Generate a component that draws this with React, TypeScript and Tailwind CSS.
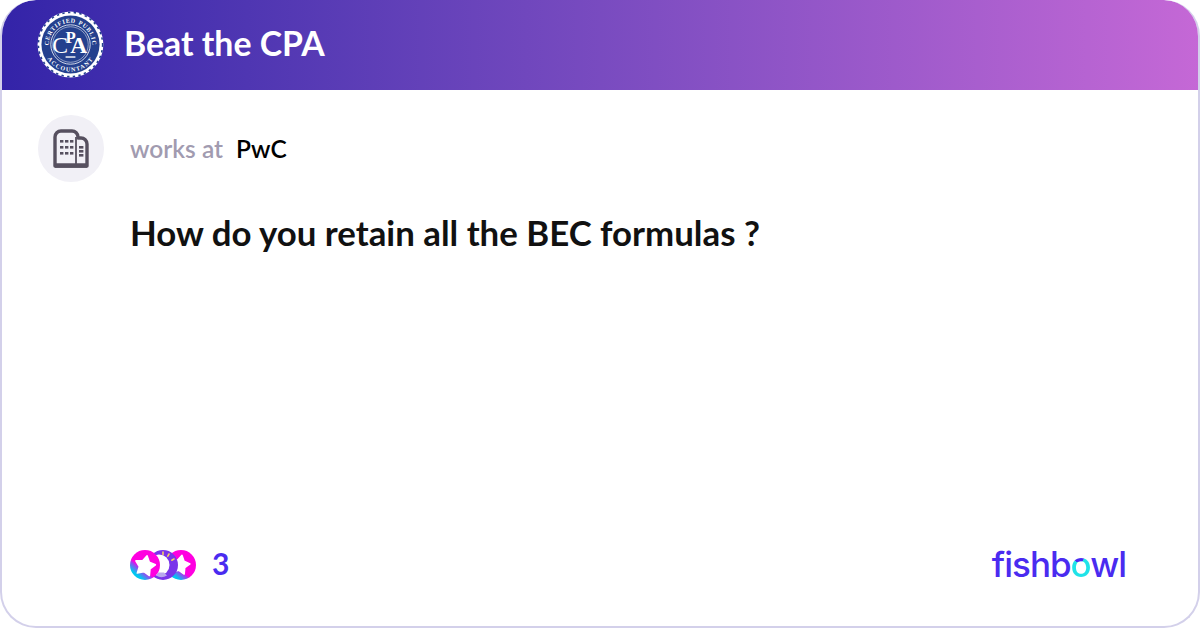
import React from 'react';

const Seal = () => (
  <svg width="67" height="67" viewBox="0 0 68 68" className="shrink-0">
    <defs>
      <path id="sealTop" d="M 14.1 43.3 A 22 22 0 1 1 53.9 43.3" />
      <path id="sealBottom" d="M 6.5 34 A 27.5 27.5 0 0 0 61.5 34" />
    </defs>
    <circle cx="34" cy="34" r="33.4" fill="#ffffff" />
    <circle cx="34" cy="34" r="32.6" fill="none" stroke="#24408e" strokeWidth="1.6" strokeDasharray="2.4 3.4" />
    <circle cx="34" cy="34" r="29.5" fill="#24408e" />
    <circle cx="34" cy="34" r="20" fill="none" stroke="#ffffff" strokeWidth="0.8" />
    <circle cx="34" cy="34" r="18" fill="none" stroke="#ffffff" strokeWidth="0.5" />
    <text fontFamily="'Liberation Serif', serif" fontWeight="700" fontSize="6.2" fill="#ffffff" letterSpacing="0.75">
      <textPath href="#sealTop" startOffset="50%" textAnchor="middle">CERTIFIED PUBLIC</textPath>
    </text>
    <text fontFamily="'Liberation Serif', serif" fontWeight="700" fontSize="6.2" fill="#ffffff" letterSpacing="1.2">
      <textPath href="#sealBottom" startOffset="50%" textAnchor="middle">ACCOUNTANT</textPath>
    </text>
    <text x="23.5" y="43" textAnchor="middle" fontFamily="'Liberation Serif', serif" fontSize="24" fill="#ffffff">C</text>
    <text x="34" y="32" textAnchor="middle" fontFamily="'Liberation Serif', serif" fontWeight="700" fontSize="17" fill="#ffffff">P</text>
    <text x="42.5" y="43" textAnchor="middle" fontFamily="'Liberation Serif', serif" fontWeight="700" fontSize="24" fill="#ffffff">A</text>
    <rect x="29" y="46" width="10" height="1.4" fill="#ffffff" />
  </svg>
);

const BuildingIcon = () => (
  <svg width="36" height="39" viewBox="0 0 36 39" fill="none">
    <path
      d="M2 37V8a6 6 0 0 1 6-6h11a6 6 0 0 1 6 6v1h3a6 6 0 0 1 6 6v22z"
      stroke="#56505f"
      strokeWidth="3.4"
      strokeLinejoin="round"
    />
    <path d="M2 36.5h32" stroke="#56505f" strokeWidth="4.5" />
    <path d="M23 8v27" stroke="#56505f" strokeWidth="1.8" />
    <g fill="#56505f">
      <rect x="7" y="11" width="3.4" height="2.6" />
      <rect x="12" y="11" width="3.4" height="2.6" />
      <rect x="17" y="11" width="3.4" height="2.6" />
      <rect x="7" y="17" width="3.4" height="2.6" />
      <rect x="12" y="17" width="3.4" height="2.6" />
      <rect x="17" y="17" width="3.4" height="2.6" />
      <rect x="7" y="23" width="3.4" height="2.6" />
      <rect x="12" y="23" width="3.4" height="2.6" />
      <rect x="17" y="23" width="3.4" height="2.6" />
      <rect x="26" y="17" width="4.4" height="2.6" />
      <rect x="26" y="21" width="4.4" height="2.6" />
      <rect x="26" y="25" width="4.4" height="2.6" />
    </g>
  </svg>
);

const Star = ({ cx, cy, r }: { cx: number; cy: number; r: number }) => {
  const pts: string[] = [];
  for (let i = 0; i < 10; i++) {
    const rad = i % 2 === 0 ? r : r * 0.55;
    const a = (Math.PI / 5) * i - Math.PI / 2 + 0.2;
    pts.push(`${cx + rad * Math.cos(a)},${cy + rad * Math.sin(a)}`);
  }
  return <polygon points={pts.join(' ')} fill="#ffffff" stroke="#ffffff" strokeWidth="1.5" strokeLinejoin="round" />;
};

const Reactions = () => (
  <svg width="68" height="32" viewBox="0 0 68 32">
    <defs>
      <linearGradient id="pinkCyan" x1="0.75" y1="0.2" x2="0.15" y2="0.95">
        <stop offset="0.55" stopColor="#ff00e0" />
        <stop offset="0.62" stopColor="#a040f0" />
        <stop offset="0.85" stopColor="#00c8f0" />
      </linearGradient>
    </defs>
    {/* right badge */}
    <circle cx="51" cy="16" r="15" fill="url(#pinkCyan)" />
    <Star cx={50} cy={16} r={10} />
    {/* middle badge */}
    <circle cx="33" cy="16" r="15" fill="#7a35ea" />
    <circle cx="29" cy="16" r="10.5" fill="#ffffff" />
    <path d="M26 26.6a11 11 0 0 0 11 0l-3-3h-6z" fill="#b9a8ee" />
    <g stroke="#f5d060" strokeWidth="1.6" strokeLinecap="round">
      <path d="M33 3v2.5" />
      <path d="M39 5l-1.2 2.2" />
      <path d="M44 10l-2.2 1.2" />
    </g>
    {/* left badge */}
    <circle cx="15" cy="16" r="15" fill="url(#pinkCyan)" />
    <Star cx={15} cy={17} r={10.5} />
  </svg>
);

export default function App() {
  return (
    <div className="w-[1200px] h-[628px] overflow-hidden bg-white font-['Lato',sans-serif]">
      <div className="h-full flex flex-col rounded-[36px] border-2 border-t-0 border-[#d3d0ea] overflow-hidden">
        <header className="-mx-[2px] h-[90px] shrink-0 flex items-center gap-[20px] pl-[37px] pb-[2px] rounded-t-[36px] bg-gradient-to-r from-[#3323a8] to-[#c568d6]">
          <Seal />
          <span className="text-[33.8px] leading-none font-bold text-white">Beat the CPA</span>
        </header>

        <main className="flex-1 flex flex-col pl-[36px] pr-[72px] pt-[25px] pb-[44px]">
          <div className="flex items-center gap-[26px]">
            <div className="w-[66px] h-[67px] rounded-full bg-[#f1f0f6] flex items-center justify-center">
              <BuildingIcon />
            </div>
            <div className="flex items-center gap-[13px] pt-[1px] text-[24.5px] leading-none font-semibold">
              <span className="text-[#a19bb0]">works at</span>
              <span className="text-black">PwC</span>
            </div>
          </div>

          <h1 className="ml-[92px] mt-[24px] text-[34.8px] leading-[54px] font-bold text-[#111111]">
            How do you retain all the BEC formulas ?
          </h1>

          <div className="mt-auto ml-[92px] flex items-center justify-between">
            <div className="flex items-center gap-[14px]">
              <Reactions />
              <span className="pb-[4px] text-[30px] leading-none font-bold text-[#4a2bf0]">3</span>
            </div>
            <div className="font-['Inter',sans-serif] text-[35px] leading-none font-[550] tracking-[-1px] text-[#4a2bf0]">
              fishb
              <span className="bg-[conic-gradient(from_300deg,#4a2bf0_0deg,#4a2bf0_90deg,#1fe3e8_95deg,#1fe3e8_360deg)] bg-clip-text text-transparent">o</span>
              wl
            </div>
          </div>
        </main>
      </div>
    </div>
  );
}
